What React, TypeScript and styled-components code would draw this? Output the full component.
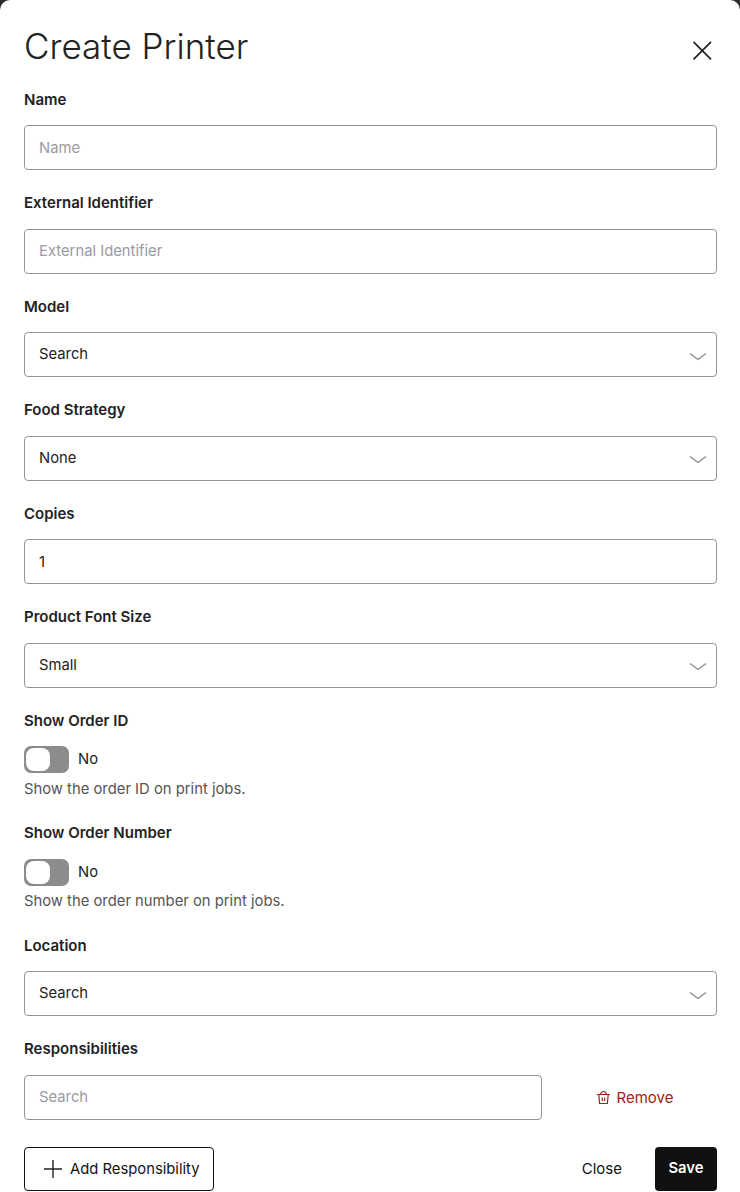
import React from "react";
import styled, { createGlobalStyle } from "styled-components";

const Global = createGlobalStyle`
  html, body { margin: 0; padding: 0; background: #2b2b2b; }
  * { box-sizing: border-box; }
  body { font-family: Inter, "Liberation Sans", sans-serif; color: #222; }
`;

const Modal = styled.div`
  width: 740px;
  height: 1192px;
  background: #fff;
  border-radius: 10px 10px 0 0;
  padding: 0 23px 0 24px;
  overflow: hidden;
`;
const Header = styled.div`
  height: 87.5px;
  display: flex;
  align-items: flex-start;
  justify-content: space-between;
`;
const Title = styled.h1`
  margin: 25px 0 0;
  font-size: 35px;
  line-height: 42px;
  font-weight: 300;
  color: #222;
`;
const CloseIcon = styled.button`
  margin: 41px 5px 0 0;
  padding: 0;
  border: 0;
  background: none;
  width: 20px;
  height: 20px;
  color: #222;
  line-height: 0;
`;
const Field = styled.div`
  margin-bottom: 21px;
`;
const Label = styled.label`
  display: block;
  font-size: 15px;
  line-height: 24.5px;
  font-weight: 600;
  color: #222;
  margin-bottom: 13px;
`;
const TextInput = styled.input`
  display: block;
  width: 100%;
  height: 45px;
  border: 1px solid #949494;
  border-radius: 4px;
  padding: 0 14px;
  font: 400 14.8px Inter, sans-serif;
  color: #222;
  outline: none;
  &::placeholder { color: #9a9aa2; opacity: 1; }
`;
const Select = styled.div`
  height: 45px;
  border: 1px solid #949494;
  border-radius: 4px;
  padding: 0 9px 0 14px;
  display: flex;
  align-items: center;
  justify-content: space-between;
  font-size: 14.8px;
  color: #222;
`;
const SelectValue = styled.span`
  margin-top: -1px;
`;
const ChevronIcon = styled.svg`
  margin-top: 3px;
`;
const Toggle = styled.div`
  width: 45px;
  height: 27px;
  border-radius: 7px;
  background: #8c8c8c;
  padding: 2px;
`;
const Knob = styled.div`
  width: 24px;
  height: 23px;
  border-radius: 8px;
  background: #fff;
`;
const ToggleRow = styled.div`
  display: flex;
  align-items: center;
  gap: 9px;
  font-size: 14.8px;
  color: #222;
`;
const ToggleText = styled.span`
  margin-top: -0.5px;
`;
const Hint = styled.div`
  font-size: 14.8px;
  line-height: 20px;
  color: #555;
  margin-top: 5.5px;
`;
const ToggleField = styled.div`
  margin-bottom: 22.5px;
`;
const ResponsibilityRow = styled.div`
  display: grid;
  grid-template-columns: 518px 1fr;
  align-items: center;
`;
const RemoveButton = styled.button`
  display: flex;
  align-items: center;
  justify-content: center;
  gap: 6px;
  border: 0;
  background: none;
  padding: 0 0 0 10px;
  font: 400 15px Inter, sans-serif;
  color: #a3201a;
`;
const Footer = styled.div`
  display: flex;
  align-items: center;
  justify-content: space-between;
  margin-top: 27.5px;
`;
const AddButton = styled.button`
  display: flex;
  align-items: center;
  gap: 7px;
  width: 190px;
  height: 44px;
  padding: 0 0 0 18px;
  border: 1px solid #111;
  border-radius: 4px;
  background: #fff;
  font: 400 14.8px Inter, sans-serif;
  color: #111;
`;
const FooterActions = styled.div`
  display: flex;
  align-items: center;
  gap: 33px;
`;
const PlainButton = styled.button`
  border: 0;
  background: none;
  padding: 0;
  margin-bottom: 2px;
  font: 400 15px Inter, sans-serif;
  color: #111;
`;
const SaveButton = styled.button`
  width: 62px;
  height: 44px;
  border: 0;
  border-radius: 4px;
  padding: 0 0 2px;
  background: #111;
  font: 600 14.8px Inter, sans-serif;
  color: #fff;
`;

const Chevron = () => (
  <ChevronIcon width="18" height="9" viewBox="0 0 18 9" fill="none" stroke="#8a8a8a" strokeWidth="1.3">
    <path d="M1 1.5 L9 7.5 L17 1.5" />
  </ChevronIcon>
);

const SelectField = ({ label, value }: { label: string; value: string }) => (
  <Field>
    <Label>{label}</Label>
    <Select>
      <SelectValue>{value}</SelectValue>
      <Chevron />
    </Select>
  </Field>
);

const SwitchField = ({ label, hint }: { label: string; hint: string }) => (
  <ToggleField>
    <Label>{label}</Label>
    <ToggleRow>
      <Toggle>
        <Knob />
      </Toggle>
      <ToggleText>No</ToggleText>
    </ToggleRow>
    <Hint>{hint}</Hint>
  </ToggleField>
);

export default function App() {
  return (
    <>
      <Global />
      <Modal>
        <Header>
          <Title>Create Printer</Title>
          <CloseIcon aria-label="Close">
            <svg width="20" height="20" viewBox="0 0 20 20" stroke="#222" strokeWidth="1.7" fill="none">
              <path d="M1.5 0.8 L19 18.3 M19 0.8 L1.5 18.3" />
            </svg>
          </CloseIcon>
        </Header>
        <Field>
          <Label>Name</Label>
          <TextInput placeholder="Name" />
        </Field>
        <Field>
          <Label>External Identifier</Label>
          <TextInput placeholder="External Identifier" />
        </Field>
        <SelectField label="Model" value="Search" />
        <SelectField label="Food Strategy" value="None" />
        <Field>
          <Label>Copies</Label>
          <TextInput defaultValue="1" />
        </Field>
        <SelectField label="Product Font Size" value="Small" />
        <SwitchField label="Show Order ID" hint="Show the order ID on print jobs." />
        <SwitchField label="Show Order Number" hint="Show the order number on print jobs." />
        <SelectField label="Location" value="Search" />
        <Field>
          <Label>Responsibilities</Label>
          <ResponsibilityRow>
            <TextInput placeholder="Search" />
            <RemoveButton>
              <svg width="15" height="15" viewBox="0 0 15 15" fill="none" stroke="#a3201a" strokeWidth="1.2">
                <path d="M1 4.5 H14 M2.8 4.5 L3.6 13.5 H11.4 L12.2 4.5 M4.5 4.5 C4.8 2.5 6 1.5 7.5 1.5 C9 1.5 10.2 2.5 10.5 4.5 M6.3 7.5 V11 M8.7 7.5 V11" />
              </svg>
              Remove
            </RemoveButton>
          </ResponsibilityRow>
        </Field>
        <Footer>
          <AddButton>
            <svg width="20" height="20" viewBox="0 0 20 20" stroke="#222" strokeWidth="1.4" fill="none">
              <path d="M10 1 V19 M1 10 H19" />
            </svg>
            Add Responsibility
          </AddButton>
          <FooterActions>
            <PlainButton>Close</PlainButton>
            <SaveButton>Save</SaveButton>
          </FooterActions>
        </Footer>
      </Modal>
    </>
  );
}
